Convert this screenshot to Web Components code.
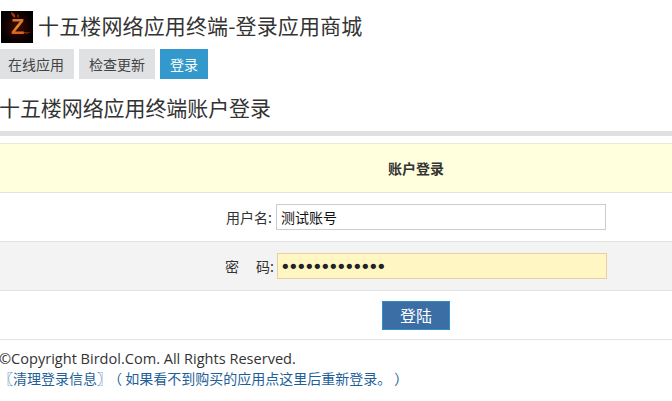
<!DOCTYPE html>
<html lang="zh">
<head>
<meta charset="utf-8">
<title>十五楼网络应用终端</title>
<style>
  html,body{margin:0;padding:0;background:#fff;}
  body{font-family:"Open Sans","Noto Sans CJK SC",sans-serif;color:#333;}
</style>
</head>
<body>
<app-header heading="十五楼网络应用终端-登录应用商城"></app-header>
<nav-bar>
  <nav-tab style="width:74px;padding-left:8px">在线应用</nav-tab>
  <nav-tab style="width:76px;padding-left:10px">检查更新</nav-tab>
  <nav-tab style="width:48px;padding-left:10px" active>登录</nav-tab>
</nav-bar>
<page-title>十五楼网络应用终端账户登录</page-title>
<login-form>
  <form-row variant="head"><b>账户登录</b></form-row>
  <form-row label="用户名:">
    <text-field value="测试账号"></text-field>
  </form-row>
  <form-row variant="alt" label="密　&nbsp;码:" shift="1">
    <text-field type="password" value="1234567890123"></text-field>
  </form-row>
  <form-row variant="submit"><login-button>登陆</login-button></form-row>
</login-form>
<page-footer>
  <span>©Copyright Birdol.Com. All Rights Reserved.</span>
  <a slot="links" href="#">〖清理登录信息〗</a><span slot="links" style="margin-left:4px">（ 如果看不到购买的应用点这里后重新登录。 ）</span>
</page-footer>

<script>
class AppHeader extends HTMLElement{
  constructor(){
    super();
    this.attachShadow({mode:'open'});
    this.shadowRoot.innerHTML=`
    <style>
      :host{display:flex;align-items:flex-start;gap:5px;padding:11px 0 6px 1px;height:32px;}
      svg{width:32px;height:32px;display:block;flex:none;}
      h1{margin:0;font:400 21px/28px "Noto Sans CJK SC",sans-serif;letter-spacing:.13px;color:#333;}
      text{font:700 22px "Liberation Sans",sans-serif;}
    </style>
    <svg viewBox="0 0 32 32">
      <defs>
        <radialGradient id="glow" cx="50%" cy="50%" r="55%">
          <stop offset="0" stop-color="#3e0c02"/>
          <stop offset="0.6" stop-color="#180301"/>
          <stop offset="1" stop-color="#000"/>
        </radialGradient>
        <linearGradient id="fire" x1="0" y1="0" x2="0" y2="1">
          <stop offset="0" stop-color="#c8601a"/>
          <stop offset="0.5" stop-color="#e88a2c"/>
          <stop offset="1" stop-color="#c8420e"/>
        </linearGradient>
        <filter id="soft"><feGaussianBlur stdDeviation="0.6"/></filter>
      </defs>
      <rect width="32" height="32" fill="url(#glow)"/>
      <g filter="url(#soft)">
        <path d="M10 1c3 1 5 3 4 6-2-1-4-3-4-6zM17 3c1 1 1 3 0 4-1-1-1-3 0-4zM22 21c2 0 5 1 7 0-2 2-5 2-7 0z" fill="#a8360a"/>
        <text x="10" y="23" fill="url(#fire)">Z</text>
      </g>
    </svg>
    <h1></h1>`;
  }
  connectedCallback(){
    this.shadowRoot.querySelector('h1').textContent=this.getAttribute('heading');
  }
}
customElements.define('app-header',AppHeader);

class NavBar extends HTMLElement{
  constructor(){
    super();
    this.attachShadow({mode:'open'});
    this.shadowRoot.innerHTML=`
    <style>
      :host{display:flex;gap:5px;height:30px;}
    </style>
    <slot></slot>`;
  }
}
customElements.define('nav-bar',NavBar);

class NavTab extends HTMLElement{
  constructor(){
    super();
    this.attachShadow({mode:'open'});
    this.shadowRoot.innerHTML=`
    <style>
      :host{display:block;box-sizing:border-box;height:30px;background:#e0e1e3;color:#444;font:400 14px/30px "Noto Sans CJK SC",sans-serif;}
      :host([active]){background:#3399cc;color:#fff;}
    </style>
    <slot></slot>`;
  }
}
customElements.define('nav-tab',NavTab);

class PageTitle extends HTMLElement{
  constructor(){
    super();
    this.attachShadow({mode:'open'});
    this.shadowRoot.innerHTML=`
    <style>
      :host{display:block;margin-top:13px;height:39px;border-bottom:5px solid #e0e0e0;text-indent:-1px;font:400 21px/30px "Noto Sans CJK SC",sans-serif;letter-spacing:-.08px;color:#333;}
    </style>
    <slot></slot>`;
  }
}
customElements.define('page-title',PageTitle);

class LoginForm extends HTMLElement{
  constructor(){
    super();
    this.attachShadow({mode:'open'});
    this.shadowRoot.innerHTML=`
    <style>
      :host{display:block;margin-top:7px;}
    </style>
    <slot></slot>`;
  }
}
customElements.define('login-form',LoginForm);

class FormRow extends HTMLElement{
  constructor(){
    super();
    this.attachShadow({mode:'open'});
    this.shadowRoot.innerHTML=`
    <style>
      :host{display:flex;align-items:center;height:48px;border-bottom:1px solid #e2e2e2;font:400 14px "Noto Sans CJK SC",sans-serif;color:#333;}
      :host([variant=head]){border-top:1px solid #e9e9d0;background:#ffffdd;justify-content:center;padding-left:160px;}
      :host([variant=alt]){background:#f3f3f3;}
      :host([variant=submit]){justify-content:center;padding-left:160px;}
      label{text-align:right;flex:none;box-sizing:border-box;white-space:pre;}
      label:empty{display:none;}
    </style>
    <label></label><slot></slot>`;
  }
  connectedCallback(){
    const label=this.shadowRoot.querySelector('label');
    const shift=Number(this.getAttribute('shift')||0);
    label.textContent=this.getAttribute('label')||'';
    label.style.width=(276+shift)+'px';
    label.style.paddingRight=(4-shift)+'px';
  }
}
customElements.define('form-row',FormRow);

class TextField extends HTMLElement{
  constructor(){
    super();
    this.attachShadow({mode:'open'});
    this.shadowRoot.innerHTML=`
    <style>
      :host{display:block;}
      input{display:block;box-sizing:border-box;width:330px;height:26px;margin:0;padding:0 4px;border:1px solid #ccc;background:#fff;color:#111;outline:0;border-radius:0;font:400 14px "Noto Sans CJK SC",sans-serif;}
      input[type=password]{background:#fff6c4;border-color:#e8d09c;color:#222;font:400 18px "DejaVu Sans",sans-serif;letter-spacing:-2.62px;padding-left:2px;}
    </style>
    <input>`;
  }
  connectedCallback(){
    const input=this.shadowRoot.querySelector('input');
    input.type=this.getAttribute('type')||'text';
    input.value=this.getAttribute('value')||'';
  }
}
customElements.define('text-field',TextField);

class LoginButton extends HTMLElement{
  constructor(){
    super();
    this.attachShadow({mode:'open'});
    this.shadowRoot.innerHTML=`
    <style>
      :host{display:block;}
      button{display:block;box-sizing:border-box;width:68px;height:29px;padding:0;background:#3a6ea5;border:1px solid #3190c5;color:#fff;font:400 16px "Noto Sans CJK SC",sans-serif;}
    </style>
    <button><slot></slot></button>`;
  }
}
customElements.define('login-button',LoginButton);

class PageFooter extends HTMLElement{
  constructor(){
    super();
    this.attachShadow({mode:'open'});
    this.shadowRoot.innerHTML=`
    <style>
      :host{display:block;padding-top:8px;font:400 14.55px/20px "Open Sans","Noto Sans CJK SC",sans-serif;color:#333;text-indent:-1px;}
      .links{font:400 14px/20px "Noto Sans CJK SC",sans-serif;color:#1e5f99;}
      ::slotted(a){color:#1e5f99;text-decoration:none;}
    </style>
    <div><slot></slot></div>
    <div class="links"><slot name="links"></slot></div>`;
  }
}
customElements.define('page-footer',PageFooter);
</script>
</body>
</html>
